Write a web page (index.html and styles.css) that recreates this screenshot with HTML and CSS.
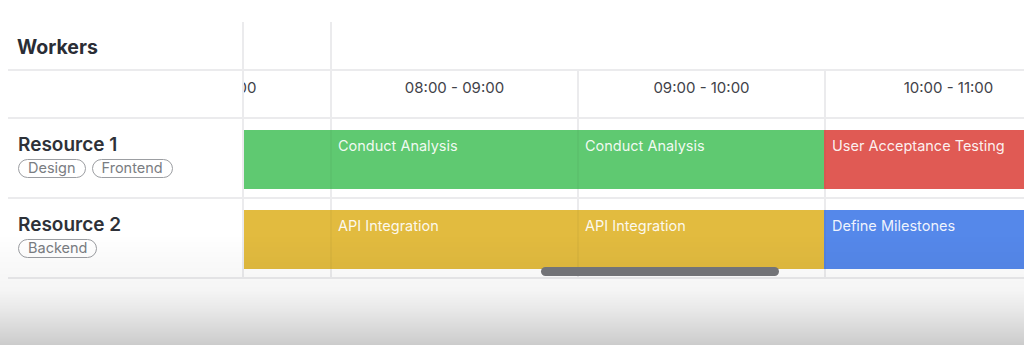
FILE: index.html
```html
<!DOCTYPE html>
<html lang="en">

<head>
    <meta charset="UTF-8">
    <meta name="viewport" content="width=device-width, initial-scale=1.0">
    <title>Scheduler</title>

    <link rel="stylesheet" href="styles.css">
</head>

<body>

    <!-- SCHEDULER -->
    <div class="scheduler">
        <div class="row row--head">
            <div class="row__label row__label--title">Workers</div>
            <div class="row__track">
                <div class="track__inner">
                    <div class="day day--prev"></div>
                    <div class="day"></div>
                </div>
            </div>
        </div>

        <div class="row row--times">
            <div class="row__label"></div>
            <div class="row__track">
                <div class="track__inner track__inner--grid">
                    <div class="time">07:00 - 08:00</div>
                    <div class="time">08:00 - 09:00</div>
                    <div class="time">09:00 - 10:00</div>
                    <div class="time">10:00 - 11:00</div>
                    <div class="time">11:00 - 12:00</div>
                </div>
            </div>
        </div>

        <div class="row row--resource">
            <div class="row__label">
                <div class="resource__name">Resource 1</div>
                <div class="resource__tags">
                    <span class="tag">Design</span>
                    <span class="tag">Frontend</span>
                </div>
            </div>
            <div class="row__track">
                <div class="track__inner track__inner--grid track__inner--events">
                    <div class="event event--green">Conduct Analysis</div>
                    <div class="event event--green">Conduct Analysis</div>
                    <div class="event event--green">Conduct Analysis</div>
                    <div class="event event--red">User Acceptance Testing</div>
                </div>
            </div>
        </div>

        <div class="row row--resource">
            <div class="row__label">
                <div class="resource__name">Resource 2</div>
                <div class="resource__tags">
                    <span class="tag">Backend</span>
                </div>
            </div>
            <div class="row__track">
                <div class="track__inner track__inner--grid track__inner--events">
                    <div class="event event--yellow">API Integration</div>
                    <div class="event event--yellow">API Integration</div>
                    <div class="event event--yellow">API Integration</div>
                    <div class="event event--blue">Define Milestones</div>
                </div>
            </div>
        </div>

        <div class="scrollbar"></div>
    </div>
    <!-- END SCHEDULER -->

    <div class="shade"></div>

</body>
</html>
```

FILE: styles.css
```css
* {
    box-sizing: border-box;
}

body {
    margin: 0;
    background-color: #fff;
    font-family: Inter, "Liberation Sans", sans-serif;
    color: #2c2f36;
}

/* Scheduler */

.scheduler {
    position: relative;
    margin: 22px 0 0 8px;
}

.row {
    display: flex;
    border-bottom: 2px solid #ebebed;
}

.row--head {
    height: 49px;
}

.row--times {
    height: 48px;
}

.row--resource {
    height: 80px;
}

.row__label {
    width: 236px;
    flex-shrink: 0;
    border-right: 2px solid #ebebed;
    padding: 15px 10px;
}

.row__label--title {
    padding: 13px 9px;
    font-size: 19.5px;
    font-weight: 700;
    color: #2a2d35;
}

.row__track {
    flex: 1;
    overflow: hidden;
}

.track__inner {
    display: flex;
    height: 100%;
    width: 1235px;
    margin-left: -161px;
}

.track__inner--grid {
    background: repeating-linear-gradient(90deg, #ebebed 0 2px, transparent 2px 247px);
}

.track__inner--events {
    align-items: flex-start;
    padding-top: 11px;
}

.day {
    flex: 1;
    border-left: 2px solid #ebebed;
}

.day--prev {
    width: 247px;
    flex: none;
    border-left: none;
}

.time {
    width: 247px;
    flex-shrink: 0;
    padding: 7px 0 0 2px;
    text-align: center;
    font-size: 15px;
    color: #3f4249;
}

.resource__name {
    font-size: 19px;
    font-weight: 600;
    line-height: 22px;
    color: #2e3138;
}

.resource__tags {
    display: flex;
    gap: 6px;
    margin-top: 3px;
}

.tag {
    display: inline-block;
    height: 19px;
    line-height: 16px;
    padding: 0 9px;
    border: 1.5px solid #9c9ea2;
    border-radius: 10px;
    font-size: 14.5px;
    color: #7a7d82;
}

.event {
    width: 247px;
    height: 59px;
    flex-shrink: 0;
    padding: 7px 6px;
    border-left: 2px solid rgb(0 0 0 / 3%);
    font-size: 14.5px;
    color: rgb(255 255 255 / 92%);
    white-space: nowrap;
    overflow: hidden;
}

.event--green {
    background-color: #5fc971;
}

.event--red {
    background-color: #e05a54;
}

.event--yellow {
    background-color: #e2bb3f;
}

.event--blue {
    background-color: #5588ea;
}

.scrollbar {
    position: absolute;
    left: 533px;
    top: 245px;
    width: 238px;
    height: 9px;
    border-radius: 5px;
    background-color: #76777b;
}

/* video-like fade at the bottom */
.shade {
    position: fixed;
    inset: 0;
    pointer-events: none;
    background: linear-gradient(to bottom,
            transparent 0,
            transparent 235px,
            rgb(0 0 0 / 2.5%) 265px,
            rgb(0 0 0 / 4%) 290px,
            rgb(0 0 0 / 9%) 310px,
            rgb(0 0 0 / 20%) 345px);
}

/* END Scheduler */
```
